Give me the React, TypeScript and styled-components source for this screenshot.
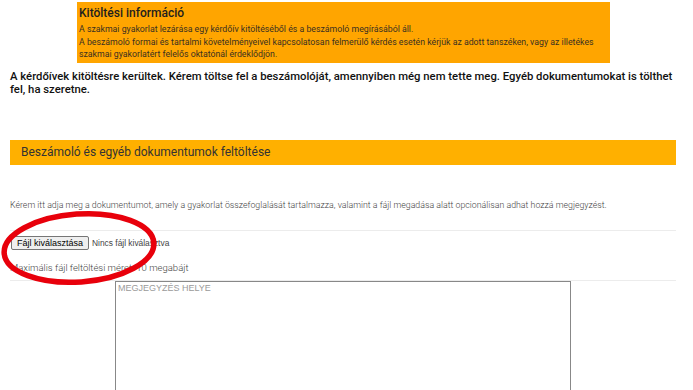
import React from 'react';
import styled, { createGlobalStyle } from 'styled-components';

const GlobalStyle = createGlobalStyle`
  html, body {
    margin: 0;
    padding: 0;
    background: #fff;
    font-family: Roboto, "Liberation Sans", Arial, sans-serif;
    overflow: hidden;
  }
`;

const Page = styled.div`
  position: relative;
  padding: 2px 17px 0 10px;
  width: 693px;
  height: 390px;
  box-sizing: border-box;
  overflow: hidden;
`;

const InfoBox = styled.div`
  width: 533px;
  margin-left: 67px;
  background: #ffa500;
  padding: 3px 2px 2px 2px;
  box-sizing: border-box;
`;

const InfoTitle = styled.h4`
  margin: 0 0 1px 0;
  font-size: 12px;
  font-weight: 500;
  color: #1e1e1e;
  line-height: 17px;
`;

const InfoText = styled.p`
  margin: 0;
  font-size: 8.75px;
  line-height: 12.5px;
  color: #3a3020;
`;

const Lead = styled.p`
  margin: 7px -2px 0 0;
  font-size: 11.3px;
  font-weight: 500;
  line-height: 13px;
  color: #111;
`;

const SectionBar = styled.div`
  margin-top: 44px;
  height: 25px;
  background: #ffb000;
  display: flex;
  align-items: center;
  padding-left: 11px;
  font-size: 12px;
  color: #333;
`;

const Hint = styled.p<{ $top: number; $size: number }>`
  margin: ${(p) => p.$top}px 0 0 0;
  font-size: ${(p) => p.$size}px;
  font-weight: 300;
  line-height: 12px;
  color: #444;
`;

const Spacer = styled.div<{ $h: number }>`
  height: ${(p) => p.$h}px;
`;

const Divider = styled.hr`
  margin: 0;
  border: 0;
  border-top: 1px solid #ececec;
`;

const FileRow = styled.div`
  display: flex;
  align-items: center;
  gap: 3px;
  margin: 5px 0 0 1px;
  font-family: "Liberation Sans", Arial, sans-serif;
`;

const FileButton = styled.button`
  font-family: "Liberation Sans", Arial, sans-serif;
  font-size: 9px;
  color: #000;
  background: #efefef;
  border: 1px solid #767676;
  border-radius: 2px;
  padding: 1px 5px;
  height: 14px;
  line-height: 10px;
`;

const FileStatus = styled.span`
  font-size: 8.4px;
  color: #444;
`;

const NoteArea = styled.textarea`
  display: block;
  width: 456px;
  height: 140px;
  margin: 0 0 0 105px;
  box-sizing: border-box;
  border: 1px solid #888;
  border-radius: 0;
  padding: 1px 2px;
  resize: none;
  font-family: "Liberation Sans", Arial, sans-serif;
  font-size: 9px;
  &::placeholder {
    color: #9a9a9a;
  }
`;

const Annotation = styled.svg`
  position: absolute;
  left: 0;
  top: 205px;
  pointer-events: none;
`;

export default function App() {
  return (
    <>
      <GlobalStyle />
      <Page>
        <InfoBox>
          <InfoTitle>Kitöltési információ</InfoTitle>
          <InfoText>A szakmai gyakorlat lezárása egy kérdőív kitöltéséből és a beszámoló megírásából áll.</InfoText>
          <InfoText>
            A beszámoló formai és tartalmi követelményeivel kapcsolatosan felmerülő kérdés esetén kérjük az adott tanszéken, vagy az illetékes szakmai gyakorlatért felelős oktatónál érdeklődjön.
          </InfoText>
        </InfoBox>
        <Lead>
          A kérdőívek kitöltésre kerültek. Kérem töltse fel a beszámolóját, amennyiben még nem tette meg. Egyéb dokumentumokat is tölthet fel, ha szeretne.
        </Lead>
        <SectionBar>Beszámoló és egyéb dokumentumok feltöltése</SectionBar>
        <Hint $top={34} $size={8.8}>
          Kérem itt adja meg a dokumentumot, amely a gyakorlat összefoglalását tartalmazza, valamint a fájl megadása alatt opcionálisan adhat hozzá megjegyzést.
        </Hint>
        <Spacer $h={19} />
        <Divider />
        <FileRow>
          <FileButton type="button">Fájl kiválasztása</FileButton>
          <FileStatus>Nincs fájl kiválasztva</FileStatus>
        </FileRow>
        <Hint $top={12} $size={9.5}>Maximális fájl feltöltési méret: 10 megabájt</Hint>
        <Spacer $h={6} />
        <Divider />
        <NoteArea placeholder="MEGJEGYZÉS HELYE" />
        <Annotation width="170" height="90" viewBox="0 0 170 90">
          <ellipse cx="79" cy="43" rx="75" ry="34" fill="none" stroke="#e8000b" strokeWidth="5.5" transform="rotate(-4 79 43)" />
        </Annotation>
      </Page>
    </>
  );
}
